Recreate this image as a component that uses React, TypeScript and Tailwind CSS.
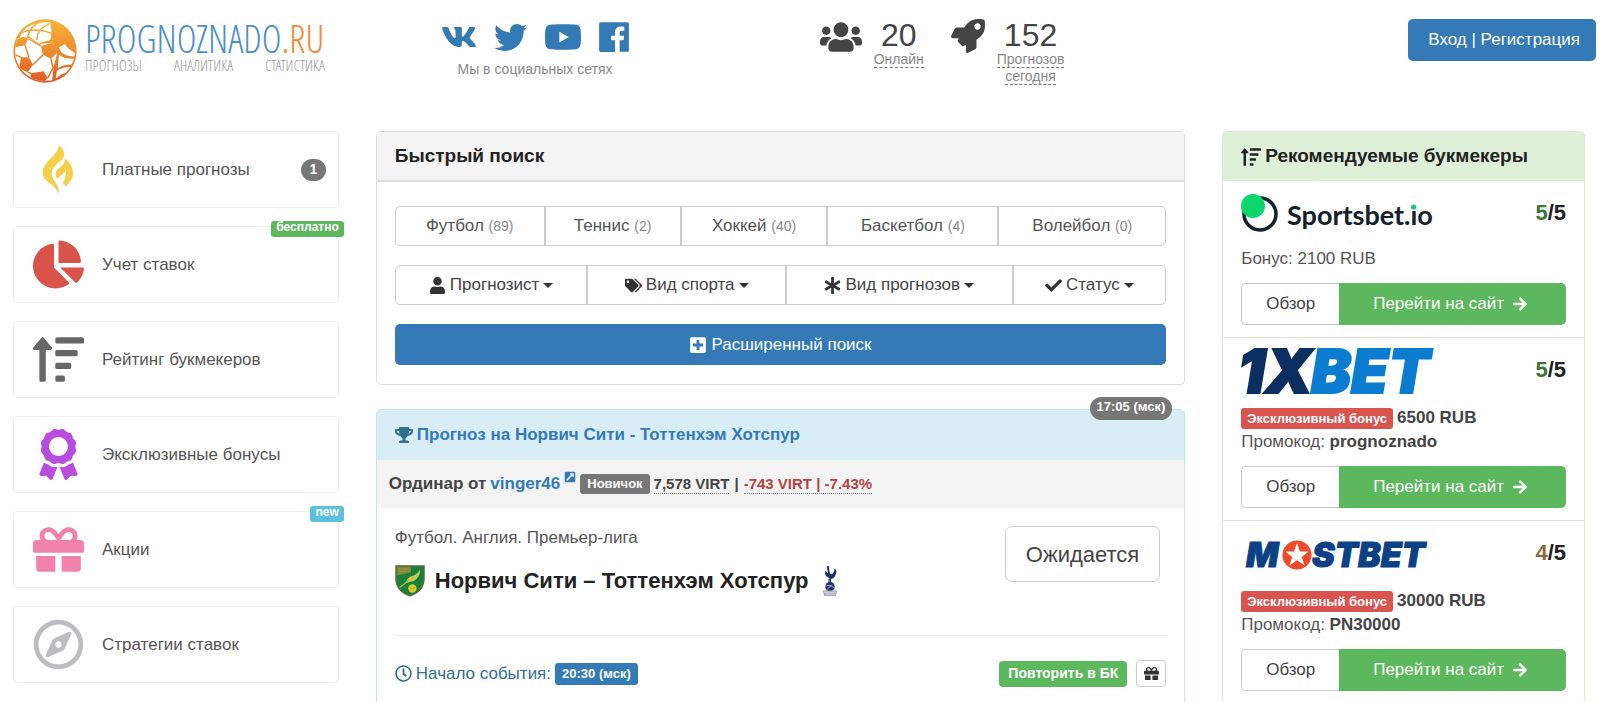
import type { ReactNode } from "react";
import type { IconType } from "react-icons";
import {
  FaArrowRight, FaAsterisk, FaAward, FaChartPie, FaCheck, FaExternalLinkSquareAlt, FaGift,
  FaPlusSquare, FaRegClock, FaRegCompass, FaSortAmountUp, FaTags, FaTrophy, FaTwitter,
  FaUser, FaUsers, FaVk, FaYoutube,
} from "react-icons/fa";

type IconProps = { className?: string };
type MenuItem = {
  title: string; icon: IconType | ((p: IconProps) => ReactNode); color: string;
  count?: number; tag?: string; tagColor?: string;
};

function FlameIcon({ className }: IconProps) {
  return (
    <svg viewBox="94 430 154 154" fill="currentColor" className={className}>
      <path d="M172 433C172 465 123 480 123 518C123 545 165 550 170 580C180 560 150 540 150 518C150 495 188 480 188 465C190 450 180 440 172 433Z" />
      <path d="M190 474C205 485 215 500 215 518C215 535 203 548 192 558L184 547C190 538 196 520 192 509C188 520 175 525 168 536C158 520 163 510 175 500C188 490 192 484 190 474Z" />
    </svg>
  );
}

const MENU: MenuItem[] = [
  { title: "Платные прогнозы",   icon: FlameIcon,      color: "text-[#f5cf49]", count: 1 },
  { title: "Учет ставок",        icon: FaChartPie,     color: "text-[#d9534a]", tag: "бесплатно", tagColor: "bg-[#5cb85c]" },
  { title: "Рейтинг букмекеров", icon: FaSortAmountUp, color: "text-[#666666]" },
  { title: "Эксклюзивные бонусы", icon: FaAward,       color: "text-[#b84be0]" },
  { title: "Акции",              icon: FaGift,         color: "text-[#f082ad]", tag: "new", tagColor: "bg-[#5bc0de]" },
  { title: "Стратегии ставок",   icon: FaRegCompass,   color: "text-[#bdbdc1]" },
];

const SPORTS = [
  { name: "Футбол", count: 89 },
  { name: "Теннис", count: 2 },
  { name: "Хоккей", count: 40 },
  { name: "Баскетбол", count: 4 },
  { name: "Волейбол", count: 0 },
];

const FILTERS = [
  { name: "Прогнозист", icon: FaUser },
  { name: "Вид спорта", icon: FaTags },
  { name: "Вид прогнозов", icon: FaAsterisk },
  { name: "Статус", icon: FaCheck },
];

function FacebookIcon() {
  return (
    <svg viewBox="0 0 448 512" fill="currentColor" className="h-[34px] w-[30px]">
      <path d="M448 56.7v398.5c0 13.7-11.1 24.7-24.7 24.7H309.1V306.5h58.2l8.7-67.6h-67v-43.2c0-19.6 5.4-32.9 33.5-32.9h35.8v-60.5c-6.2-.8-27.4-2.7-52.2-2.7-51.6 0-87 31.5-87 89.4v49.9h-58.4v67.6h58.4V480H24.7C11.1 480 0 468.9 0 455.3V56.7C0 43.1 11.1 32 24.7 32h398.5c13.7 0 24.8 11.1 24.8 24.7z" />
    </svg>
  );
}

function RocketIcon({ className }: IconProps) {
  return (
    <svg viewBox="0 0 512 512" fill="currentColor" className={className}>
      <path d="M505.1 19.1C503.8 13 499 8.2 492.9 6.9 460.7 0 435.5 0 410.4 0 307.2 0 245.3 55.2 199.1 128H94.9c-18.2 0-34.8 10.300-42.900 26.500L2.600 253.300c-8 16 3.600 34.700 21.500 34.700h95.100c-5.900 12.800-11.900 25.500-18 37.700-3.100 6.200-1.900 13.600 3 18.500l63.600 63.600c4.900 4.900 12.300 6.100 18.500 3 12.200-6.100 24.900-12 37.700-17.900V488c0 17.800 18.800 29.400 34.700 21.500l98.700-49.400c16.300-8.100 26.500-24.800 26.500-42.900V312.800c72.600-46.300 128-108.400 128-211.100.1-25.200.1-50.400-6.800-82.600zM400 160c-26.500 0-48-21.500-48-48s21.500-48 48-48 48 21.500 48 48-21.500 48-48 48z" />
    </svg>
  );
}

function BallLogo() {
  return (
    <svg viewBox="40 53 192 192" className="size-16 shrink-0">
      <defs>
        <linearGradient id="ball" gradientUnits="userSpaceOnUse" x1="136" y1="53" x2="136" y2="245">
          <stop offset="0" stopColor="#f6b63a" />
          <stop offset="0.5" stopColor="#ee8a2c" />
          <stop offset="1" stopColor="#dd5a22" />
        </linearGradient>
        <clipPath id="ballClip"><circle cx="136" cy="149" r="90" /></clipPath>
      </defs>
      <circle cx="136" cy="149" r="95" fill="url(#ball)" />
      <g clipPath="url(#ballClip)">
        <g fill="#fff">
          <path d="M66 92Q95 60 152 62L152 68Q158 90 152 116L118 126 90 106 60 112Z" />
          <path d="M40 110L90 110 120 128 160 124 172 158 162 196 156 250 40 250Z" />
          <path d="M178 138L196 128Q206 146 226 154L228 166Q200 166 184 152Z" />
          <path d="M178 160Q196 174 226 172L222 190Q196 188 174 200Z" />
          <path d="M172 208Q194 194 218 198L206 216Q186 214 168 232Z" />
        </g>
        <g fill="url(#ball)">
          <path d="M124 134L160 124 172 154 154 172 130 160Z" />
          <path d="M64 168L88 168 100 190 84 212 58 202Z" />
          <path d="M94 216L132 210 144 230 128 248 92 244Z" />
          <path d="M48 116L70 106 86 112 76 132 46 138Z" />
        </g>
        <g fill="none" stroke="url(#ball)" strokeWidth="4.500">
          <path d="M62 96Q100 76 156 96M84 108Q92 70 126 60M112 116Q110 84 150 66" />
          <path d="M86 112L124 134M130 160L100 190M88 168L76 132M84 212L94 216M154 172L160 200 144 230M64 168L46 160" />
        </g>
      </g>
    </svg>
  );
}

function Logo() {
  return (
    <a href="#" className="flex gap-2 font-['Open_Sans_Condensed_Light','Roboto_Condensed_Light','Roboto_Condensed','Liberation_Sans_Narrow',sans-serif] font-light">
      <BallLogo />
      <span className="flex w-[240px] flex-col">
        <span className="flex h-[38px] items-center whitespace-nowrap text-[38px] leading-[38px] text-[#4a90cc]">
          PROGNOZNADO<span className="text-[#ee8a32]">.RU</span>
        </span>
        <span className="flex justify-between text-[15px] leading-4 text-[#999999]">
          <span>ПРОГНОЗЫ</span><span>АНАЛИТИКА</span><span>СТАТИСТИКА</span>
        </span>
      </span>
    </a>
  );
}

function Header() {
  return (
    <header className="grid h-[131px] grid-cols-[400fr_270fr_544fr_386fr] items-start pt-[19px]">
      <div className="pl-[13px]"><Logo /></div>

      <div className="flex flex-col items-center text-[#337ab7]">
        <div className="flex h-9 items-center gap-[17px]">
          <a href="#" aria-label="VK"><FaVk className="size-9" /></a>
          <a href="#" aria-label="Twitter"><FaTwitter className="size-[33px]" /></a>
          <a href="#" aria-label="YouTube"><FaYoutube className="size-[38px]" /></a>
          <a href="#" aria-label="Facebook"><FacebookIcon /></a>
        </div>
        <p className="text-[14px] leading-7 text-[#888888]">Мы в социальных сетях</p>
      </div>

      <div className="flex items-start justify-center text-[#444444]">
        <FaUsers className="h-9 w-[42px]" />
        <div className="ml-3 flex flex-col items-center">
          <span className="text-[32px] leading-8">20</span>
          <span className="border-b border-dashed border-[#777777] text-[14px] leading-4 text-[#888888]">Онлайн</span>
        </div>
        <RocketIcon className="ml-[27px] size-[34px]" />
        <div className="ml-3 flex flex-col items-center text-center">
          <span className="text-[32px] leading-8">152</span>
          <span className="border-b border-dashed border-[#777777] text-[14px] leading-4 text-[#888888]">Прогнозов</span>
          <span className="border-b border-dashed border-[#777777] text-[14px] leading-4 text-[#888888]">сегодня</span>
        </div>
      </div>

      <div className="flex justify-end pr-1">
        <button className="h-[42px] rounded-[5px] bg-[#337ab7] pl-5 pr-4 text-[17px] text-white">Вход | Регистрация</button>
      </div>
    </header>
  );
}

function Sidebar() {
  return (
    <nav className="flex flex-col gap-[18px]">
      {MENU.map(({ title, icon: Icon, color, count, tag, tagColor }) => (
        <a key={title} href="#" className="relative flex h-[77px] items-center rounded-[4px] border border-[#eeeeee] text-[17px] text-[#555555]">
          <span className="flex w-[88px] justify-center">
            <Icon className={`h-[51px] w-auto ${color}`} />
          </span>
          {title}
          {count !== undefined && (
            <span className="ml-auto mr-3 flex h-[22px] w-[25px] items-center justify-center rounded-full bg-[#777777] text-[14px] font-bold text-white">{count}</span>
          )}
          {tag && (
            <span className={`absolute -right-1.5 -top-1.5 h-4 rounded-[3px] px-[5px] text-[12px] font-bold leading-3 text-white ${tagColor}`}>{tag}</span>
          )}
        </a>
      ))}
    </nav>
  );
}

function Caret() {
  return <span className="ml-1 inline-block border-x-[5px] border-t-[5px] border-x-transparent border-t-[#333333] align-middle" />;
}

function QuickSearch() {
  return (
    <section className="rounded-[5px] border border-[#dddddd]">
      <h2 className="border-b-2 border-[#dddddd] bg-[#f4f4f4] px-[18px] text-[19px] font-bold leading-[48px] text-[#222222]">Быстрый поиск</h2>
      <div className="flex flex-col gap-[19px] px-[18px] pb-[19px] pt-6">
        <div className="grid h-10 grid-cols-[150fr_136fr_147fr_171fr_166fr] divide-x-2 divide-[#cccccc] rounded-[5px] border border-[#cccccc]">
          {SPORTS.map((s) => (
            <button key={s.name} className="text-[17px] text-[#555555]">
              {s.name} <small className="text-[14px] text-[#888888]">({s.count})</small>
            </button>
          ))}
        </div>
        <div className="grid h-10 grid-cols-[193fr_199fr_227fr_152fr] divide-x-2 divide-[#cccccc] rounded-[5px] border border-[#cccccc]">
          {FILTERS.map(({ name, icon: Icon }) => (
            <button key={name} className="flex items-center justify-center text-[17px] text-[#444444]">
              <Icon className="mr-1 h-[17px] w-auto text-[#333333]" />
              {name}
              <Caret />
            </button>
          ))}
        </div>
        <button className="flex h-[41px] items-center justify-center gap-1 rounded-[5px] bg-[#337ab7] text-[17px] text-white">
          <FaPlusSquare className="size-[18px]" />
          Расширенный поиск
        </button>
      </div>
    </section>
  );
}

function NorwichCrest() {
  return (
    <svg viewBox="0 0 32 34" className="h-8 w-[30px]">
      <path d="M1 1H31V16Q30 28 16 33Q2 28 1 16Z" fill="#17803a" stroke="#5b6b33" strokeWidth="1.4" />
      <path d="M2 2H17V8L2 11Z" fill="#7d8a36" />
      <path d="M4 4H15M4 7H13" stroke="#b08a3a" strokeWidth="1.2" />
      <path d="M27 4Q27 13 20 17L11 19Q14 12 20 11Q25 9 27 4Z" fill="#c8c850" />
      <path d="M14 17L5 24" stroke="#a8b83c" strokeWidth="1.5" />
      <circle cx="18.500" cy="25" r="4.500" fill="#d8cf2a" />
      <path d="M15 24Q18 27 22 24" stroke="#a8a022" fill="none" />
    </svg>
  );
}

function SpursCrest() {
  return (
    <svg viewBox="0 0 18 34" className="h-8 w-[18px]">
      <path d="M6 1Q9 1 8 4L9 9Q11 11 13 8L14 4Q17 6 15 10Q14 14 10 15L5 12Q3 9 4 6L7 9 6 4Q5 3 6 1Z" fill="#1d2f6f" />
      <path d="M9 14L10 19M8 15L8 19" stroke="#1d2f6f" strokeWidth="1.2" />
      <circle cx="9" cy="23" r="5" fill="#1d2f6f" />
      <path d="M5 22Q9 20 13 24M6 26L11 21" stroke="#b9c3e2" strokeWidth="0.9" fill="none" />
      <path d="M1 27H17L15 33H3Z" fill="#a9abb8" />
      <path d="M3 29H15M4 31H14" stroke="#e6e7ee" strokeWidth="0.8" />
    </svg>
  );
}

function Forecast() {
  return (
    <section className="relative rounded-[5px] border border-[#bce8f1]">
      <span className="absolute -top-[13px] right-3 h-[23px] rounded-full bg-[#777777] px-[7px] text-[13px] font-bold leading-5 text-white">17:05 (мск)</span>
      <h2 className="flex h-[50px] items-center gap-1 rounded-t-[4px] bg-[#d9edf7] px-[18px] text-[17px] font-bold text-[#337ab7]">
        <FaTrophy className="h-[18px] w-auto text-[#31708f]" />
        <a href="#">Прогноз на Норвич Сити - Тоттенхэм Хотспур</a>
      </h2>
      <div className="flex h-12 items-center gap-1 bg-[#f3f3f3] px-3 text-[17px] font-bold text-[#444444]">
        Ординар от
        <a href="#" className="flex text-[#337ab7]">vinger46 <FaExternalLinkSquareAlt className="ml-1 size-3" /></a>
        <span className="rounded-[3px] bg-[#777777] px-[7px] text-[13px] leading-5 text-white">Новичок</span>
        <span className="flex gap-[5px] text-[15px] leading-[18px]">
          <span className="border-b border-dotted border-[#777777]">7,578 VIRT</span>
          |
          <span className="border-b border-dotted border-[#777777] text-[#b54441]">-743 VIRT | -7.43%</span>
        </span>
      </div>
      <div className="px-[18px]">
        <div className="flex justify-between border-b border-[#eeeeee] pb-[37px] pt-[18px]">
          <div>
            <p className="text-[17px] leading-6 text-[#555555]">Футбол. Англия. Премьер-лига</p>
            <h3 className="mt-3.5 flex items-center text-[22px] font-bold leading-[34px] text-[#222222]">
              <NorwichCrest />
              <span className="ml-2.5 mr-3">Норвич Сити – Тоттенхэм Хотспур</span>
              <SpursCrest />
            </h3>
          </div>
          <button className="mr-1.5 h-14 rounded-[7px] border border-[#cccccc] px-5 text-[22px] text-[#444444]">Ожидается</button>
        </div>
        <div className="flex items-center pb-10 pt-6 text-[17px] text-[#31708f]">
          <FaRegClock className="mr-1 size-[17px]" />
          Начало события:
          <span className="ml-1 rounded-[3px] bg-[#337ab7] px-[7px] text-[13px] font-bold leading-[22px] text-white">20:30 (мск)</span>
          <button className="ml-auto h-[26px] rounded-[4px] bg-[#5cb85c] px-[9px] text-[14px] font-bold text-white">Повторить в БК</button>
          <button aria-label="Бонус" className="ml-[9px] flex h-[27px] w-[30px] items-center justify-center rounded-[4px] border border-[#cccccc] text-[#333333]">
            <FaGift className="size-[15px]" />
          </button>
        </div>
      </div>
    </section>
  );
}

function SportsbetLogo() {
  return (
    <svg viewBox="0 0 194 42" className="h-[42px] w-[194px]">
      <circle cx="19" cy="21" r="16" fill="none" stroke="#14202b" strokeWidth="3.500" />
      <circle cx="12" cy="13" r="12" fill="#0ad66b" />
      <text x="46" y="32" fontFamily="Lato, sans-serif" fontWeight="700" fontSize="27" fill="#14202b">Sportsbet.io</text>
      <circle cx="172.500" cy="14" r="2.500" fill="#0ad66b" />
    </svg>
  );
}

function XbetLogo() {
  return (
    <svg viewBox="0 0 194 44" className="h-11 w-[194px] overflow-visible font-['Inter',sans-serif] text-[60px] font-black italic">
      <text x="-3" y="43" fill="#0b2f60" stroke="#0b2f60" strokeWidth="2">1X</text>
      <text x="70" y="43" fill="#0a7dd0" stroke="#0a7dd0" strokeWidth="2">BET</text>
    </svg>
  );
}

function MostbetLogo() {
  return (
    <svg viewBox="0 0 194 44" className="h-11 w-[194px] overflow-visible font-['Inter',sans-serif] text-[34px] font-black italic">
      <text x="5" y="34" fill="#0d4185" stroke="#0d4185">M</text>
      <text x="71" y="34" fill="#0d4185" stroke="#0d4185">STBET</text>
      <circle cx="56" cy="22" r="14.500" fill="#ef4a2a" />
      <path d="M56 10L59 18.500 67.500 18.500 60.800 24 63.500 32.500 56 27.300 48.500 32.500 51.200 24 44.500 18.500 53 18.500Z" fill="#fff" />
    </svg>
  );
}

type BookmakerProps = { logo: ReactNode; score: number; scoreColor: string; children: ReactNode };

function Bookmaker({ logo, score, scoreColor, children }: BookmakerProps) {
  return (
    <article className="border-b border-[#dde3d6] px-[18px] pb-3 pt-3 last:border-b-0">
      <div className="flex justify-between">
        {logo}
        <strong className="text-[22px] leading-10 text-[#222222]"><span className={scoreColor}>{score}</span>/5</strong>
      </div>
      <div className="mt-3 text-[17px] leading-6 text-[#555555]">{children}</div>
      <div className="mt-3 flex h-[42px] text-[17px]">
        <button className="w-[98px] rounded-l-[5px] border border-r-0 border-[#cccccc] text-[#444444]">Обзор</button>
        <button className="flex flex-1 items-center justify-center gap-2 rounded-r-[5px] bg-[#5cb85c] pr-1 text-white">
          Перейти на сайт <FaArrowRight className="size-4" />
        </button>
      </div>
    </article>
  );
}

function Exclusive({ bonus, promo }: { bonus: string; promo: string }) {
  return (
    <>
      <p className="flex items-center gap-1 font-bold text-[#444444]">
        <span className="rounded-[3px] bg-[#d9534f] px-1.5 text-[13px] leading-[21px] text-white">Эксклюзивный бонус</span>
        {bonus}
      </p>
      <p>Промокод: <strong className="text-[#444444]">{promo}</strong></p>
    </>
  );
}

export default function App() {
  return (
    <div className="min-h-screen bg-white font-['Liberation_Sans',Arial,sans-serif]">
      <Header />
      <main className="grid grid-cols-[326fr_810fr_363fr] items-start gap-[37px] pl-[13px] pr-[15px]">
        <Sidebar />

        <div className="flex flex-col gap-6">
          <QuickSearch />
          <Forecast />
        </div>

        <aside className="rounded-[5px] border border-[#dfe8d6]">
          <h2 className="flex h-[49px] items-center gap-1 bg-[#dff0d8] px-[18px] text-[19px] font-bold text-[#222222]">
            <FaSortAmountUp className="size-5" />
            Рекомендуемые букмекеры
          </h2>
          <Bookmaker logo={<SportsbetLogo />} score={5} scoreColor="text-[#3c763d]">
            Бонус: 2100 RUB
          </Bookmaker>
          <Bookmaker logo={<XbetLogo />} score={5} scoreColor="text-[#3c763d]">
            <Exclusive bonus="6500 RUB" promo="prognoznado" />
          </Bookmaker>
          <Bookmaker logo={<MostbetLogo />} score={4} scoreColor="text-[#8a6d3b]">
            <Exclusive bonus="30000 RUB" promo="PN30000" />
          </Bookmaker>
        </aside>
      </main>
    </div>
  );
}
